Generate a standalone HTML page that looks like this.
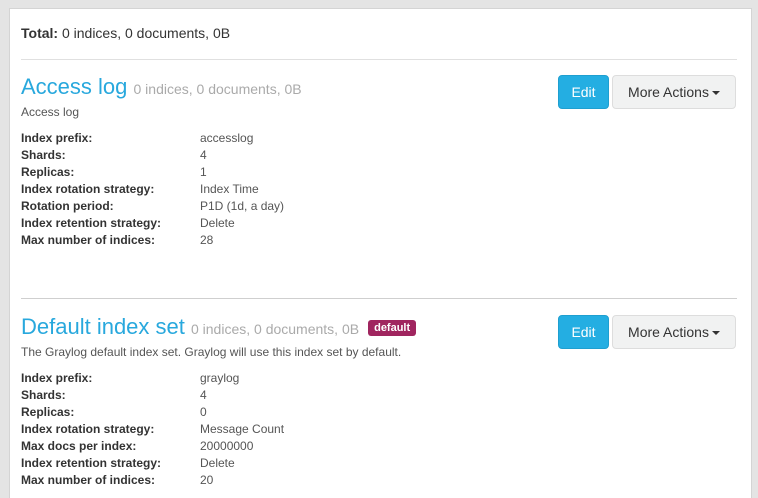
<!DOCTYPE html>
<html style="height:498px;overflow:hidden"><head><meta charset="utf-8"><style>
*{margin:0;padding:0;box-sizing:border-box}
body{width:758px;height:498px;background:#e4e4e4;font-family:"Liberation Sans",sans-serif;color:#333;overflow:hidden;position:relative}
.panel{position:absolute;left:9px;top:8px;width:743px;height:490px;background:#fff;border:1px solid #d4d4d4;border-bottom:none}
.abs{position:absolute;white-space:nowrap}
.total{left:11px;top:16px;font-size:14px}
.hr{position:absolute;left:11px;width:716px;height:1px;background:#e0e0e0}
.title{font-size:22px;color:#28a8dd}
.title small{font-size:14px;color:#aaa}
.desc{font-size:12px;color:#555}
.row{font-size:12px;height:17px;line-height:17px}
.row b{display:inline-block;width:179px;color:#333}
.row span{color:#555}
.btn{position:absolute;height:34px;border-radius:4px;font-size:14px;line-height:32px;text-align:center}
.edit{width:51px;background:#24aee2;border:1px solid #1e9fd0;color:#fff}
.more{width:124px;background:#f1f2f2;border:1px solid #ddd;color:#333}
.caret{display:inline-block;width:0;height:0;border-left:4px solid transparent;border-right:4px solid transparent;border-top:4px solid #333;vertical-align:middle;margin-left:3px}
.badge{display:inline-block;background:#a0255f;color:#fff;font-size:11px;font-weight:bold;padding:2px 6px;border-radius:3px;vertical-align:3px;margin-left:9px}
</style></head><body>
<div class="panel">
<div class="abs total"><b>Total:</b> 0 indices, 0 documents, 0B</div>
<div class="hr" style="top:50px"></div>

<div class="abs title" style="left:11px;top:65px">Access log <small>0 indices, 0 documents, 0B</small></div>
<div class="abs desc" style="left:11px;top:96px">Access log</div>
<div class="abs" style="left:11px;top:121px">
<div class="row"><b>Index prefix:</b><span>accesslog</span></div>
<div class="row"><b>Shards:</b><span>4</span></div>
<div class="row"><b>Replicas:</b><span>1</span></div>
<div class="row"><b>Index rotation strategy:</b><span>Index Time</span></div>
<div class="row"><b>Rotation period:</b><span>P1D (1d, a day)</span></div>
<div class="row"><b>Index retention strategy:</b><span>Delete</span></div>
<div class="row"><b>Max number of indices:</b><span>28</span></div>
</div>
<div class="btn edit" style="left:548px;top:66px">Edit</div>
<div class="btn more" style="left:602px;top:66px">More Actions<span class="caret"></span></div>

<div class="hr" style="top:289px;background:#cfcfcf"></div>

<div class="abs title" style="left:11px;top:305px">Default index set <small>0 indices, 0 documents, 0B</small><span class="badge">default</span></div>
<div class="abs desc" style="left:11px;top:336px">The Graylog default index set. Graylog will use this index set by default.</div>
<div class="abs" style="left:11px;top:361px">
<div class="row"><b>Index prefix:</b><span>graylog</span></div>
<div class="row"><b>Shards:</b><span>4</span></div>
<div class="row"><b>Replicas:</b><span>0</span></div>
<div class="row"><b>Index rotation strategy:</b><span>Message Count</span></div>
<div class="row"><b>Max docs per index:</b><span>20000000</span></div>
<div class="row"><b>Index retention strategy:</b><span>Delete</span></div>
<div class="row"><b>Max number of indices:</b><span>20</span></div>
</div>
<div class="btn edit" style="left:548px;top:306px">Edit</div>
<div class="btn more" style="left:602px;top:306px">More Actions<span class="caret"></span></div>
</div>
</body></html>
